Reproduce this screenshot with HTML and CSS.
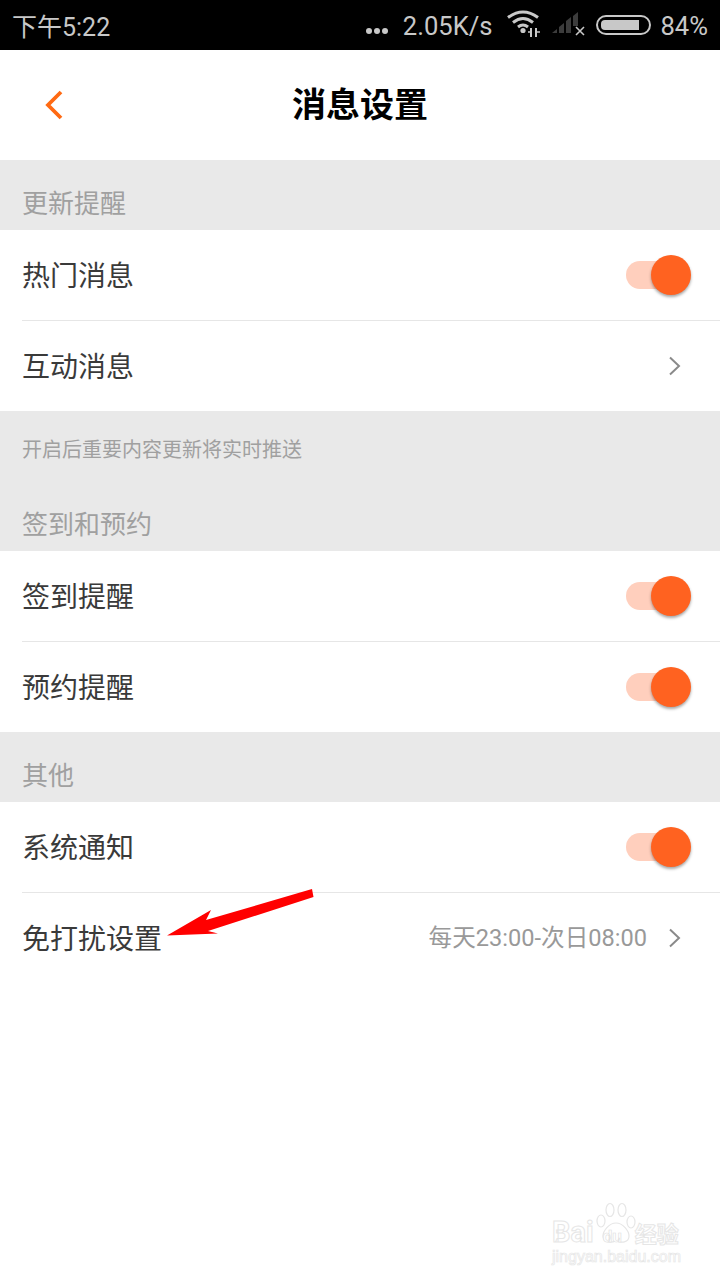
FILE: index.html
```html
<!DOCTYPE html>
<html lang="zh-CN">
<head>
  <meta charset="UTF-8">
  <title>消息设置</title>
  <link rel="stylesheet" href="styles.css">
</head>
<body>
  <div class="statusbar">
    <span class="time">下午5:22</span>
    <div class="status-right">
      <span class="dots"><i></i><i></i><i></i></span>
      <span class="speed">2.05K/s</span>
      <svg class="wifi" width="36" height="28" viewBox="0 0 36 28">
        <path d="M2 8.5 Q17 -2.5 32 8.5" fill="none" stroke="#c8c8c8" stroke-width="3"/>
        <path d="M7 13.5 Q17 5.5 27 13.5" fill="none" stroke="#c8c8c8" stroke-width="3"/>
        <path d="M12 18 Q17 14 22 18" fill="none" stroke="#c8c8c8" stroke-width="3"/>
        <circle cx="17" cy="21.5" r="2.6" fill="#c8c8c8"/>
        <path d="M24 19v9h2v-9zM29 19v9h2v-9z" fill="#c8c8c8"/>
        <path d="M22 23h2M31 23h3" stroke="#c8c8c8" stroke-width="1.5"/>
      </svg>
      <svg class="signal" width="34" height="24" viewBox="0 0 34 24">
        <path d="M0 21 L5 17 V21Z M7 21 V15 L12 11 V21Z" fill="#3c3c3c"/>
        <path d="M14 21 V9 L19 5 V21Z M21 14 V4 L26 0 V14Z" fill="#3c3c3c"/>
        <path d="M24 15 L32 23 M32 15 L24 23" stroke="#c8c8c8" stroke-width="1.6"/>
      </svg>
      <span class="battery"><span class="battery-fill"></span></span>
      <span class="percent">84%</span>
    </div>
  </div>

  <header class="topbar">
    <svg class="back" width="20" height="30" viewBox="0 0 20 30">
      <path d="M17 2 L4 15 L17 28" fill="none" stroke="#ff6a13" stroke-width="3.8"/>
    </svg>
    <h1>消息设置</h1>
  </header>

  <div class="section-title">更新提醒</div>
  <div class="row">
    <span>热门消息</span>
    <span class="switch"><span class="knob"></span></span>
  </div>
  <div class="row row-last">
    <span>互动消息</span>
    <svg class="arrow" width="14" height="20" viewBox="0 0 14 20">
      <path d="M2 1.5 L11 10 L2 18.5" fill="none" stroke="#8a8a8a" stroke-width="2"/>
    </svg>
  </div>
  <div class="note">开启后重要内容更新将实时推送</div>

  <div class="section-title section-title-after-note">签到和预约</div>
  <div class="row">
    <span>签到提醒</span>
    <span class="switch"><span class="knob"></span></span>
  </div>
  <div class="row row-last">
    <span>预约提醒</span>
    <span class="switch"><span class="knob"></span></span>
  </div>

  <div class="section-title">其他</div>
  <div class="row">
    <span>系统通知</span>
    <span class="switch"><span class="knob"></span></span>
  </div>
  <div class="row row-last">
    <span>免打扰设置</span>
    <span class="row-right">
      <span class="row-value">每天23:00-次日08:00</span>
      <svg class="arrow" width="14" height="20" viewBox="0 0 14 20">
        <path d="M2 1.5 L11 10 L2 18.5" fill="none" stroke="#8a8a8a" stroke-width="2"/>
      </svg>
    </span>
  </div>

  <svg class="pointer" width="150" height="50" viewBox="0 0 150 50">
    <path d="M145 0 L146.5 8 L41 42 L51 44.5 L0 46.5 L44 21 L39 31Z" fill="#ff0000"/>
  </svg>

  <div class="watermark">
    <svg class="paw" width="40" height="44" viewBox="0 0 40 44">
      <g fill="#fff" stroke="#e6e6e6" stroke-width="1.2">
        <ellipse cx="5" cy="19" rx="4" ry="6"/>
        <ellipse cx="14" cy="8" rx="4" ry="6.5"/>
        <ellipse cx="26" cy="8" rx="4" ry="6.5"/>
        <ellipse cx="35" cy="20" rx="4" ry="6"/>
        <path d="M20 21 C27 21 33 29 33 34 C33 41 25 41 20 39 C15 41 7 41 7 34 C7 29 13 21 20 21Z"/>
      </g>
    </svg>
    <div class="wm-logo"><span>Bai</span><span class="wm-du">du</span><span class="wm-cn">经验</span></div>
    <div class="wm-url">jingyan.baidu.com</div>
  </div>
</body>
</html>
```

FILE: styles.css
```css
html, body {
  margin: 0;
  padding: 0;
}

body {
  position: relative;
  width: 720px;
  height: 1280px;
  overflow: hidden;
  background-color: #fff;
  font-family: "Roboto", "Noto Sans CJK SC", sans-serif;
}

.statusbar {
  height: 50px;
  background-color: #000;
  color: #c8c8c8;
  display: flex;
  align-items: center;
  justify-content: space-between;
  padding: 0 12px;
  font-size: 25px;
}

.status-right {
  display: flex;
  align-items: center;
  font-size: 25.6px;
  padding-top: 1px;
}

.dots {
  display: flex;
  gap: 2px;
  margin-top: 10px;
  margin-right: 15px;
}

.dots i {
  width: 6px;
  height: 6px;
  border-radius: 50%;
  background-color: #c8c8c8;
}

.wifi {
  margin-left: 14px;
  margin-bottom: 6px;
}

.signal {
  margin-left: 10px;
  margin-bottom: 3px;
}

.battery {
  width: 55px;
  height: 20px;
  margin-left: 10px;
  margin-bottom: 2px;
  border: 2px solid #c8c8c8;
  border-radius: 11px;
  padding: 3px;
  box-sizing: border-box;
  display: block;
}

.battery-fill {
  display: block;
  width: 38px;
  height: 10px;
  background-color: #c8c8c8;
  border-radius: 4px 0 0 4px;
}

.percent {
  margin-left: 9px;
}

.topbar {
  height: 110px;
  display: flex;
  align-items: center;
  justify-content: center;
  position: relative;
}

.back {
  position: absolute;
  left: 44px;
  top: 40px;
}

.topbar h1 {
  margin: 0;
  font-size: 34px;
  font-weight: 700;
  color: #000;
  position: relative;
  top: -3px;
}

.section-title {
  height: 70px;
  box-sizing: border-box;
  padding: 27px 22px 0;
  background-color: #e9e9e9;
  color: #a0a0a0;
  font-size: 26px;
  line-height: 34px;
}

.section-title-after-note {
  height: 60px;
  padding-top: 17px;
}

.row {
  height: 91px;
  box-sizing: border-box;
  margin-left: 22px;
  padding: 0 30px 0 0;
  display: flex;
  align-items: center;
  justify-content: space-between;
  border-bottom: 1px solid #e6e6e6;
  color: #3a3a3a;
  font-size: 28px;
}

.row > span:first-child {
  position: relative;
  top: -1px;
}

.row-last {
  height: 90px;
  border-bottom: none;
}

.row-right {
  display: flex;
  align-items: center;
  gap: 21px;
}

.row-value {
  font-size: 23.6px;
  color: #999;
  position: relative;
  top: -2px;
}

.arrow {
  display: block;
  margin-right: 8px;
}

.switch {
  width: 64px;
  height: 28px;
  border-radius: 14px;
  background-color: #ffcfbd;
  position: relative;
  display: block;
}

.knob {
  position: absolute;
  right: -1px;
  top: -6px;
  width: 40px;
  height: 40px;
  border-radius: 50%;
  background-color: #ff6220;
  box-shadow: 0 2px 3px rgba(0, 0, 0, 0.35);
}

.note {
  height: 80px;
  box-sizing: border-box;
  padding: 24px 22px 0;
  background-color: #e9e9e9;
  color: #a0a0a0;
  font-size: 20px;
  line-height: 30px;
}

.pointer {
  position: absolute;
  left: 167px;
  top: 889px;
}

.watermark {
  position: absolute;
  left: 552px;
  top: 1202px;
  width: 132px;
  color: #e6e6e6;
}

.paw {
  position: absolute;
  left: 44px;
  top: 0;
}

.wm-logo {
  position: relative;
  margin-top: 15px;
  display: flex;
  align-items: baseline;
  font-size: 29px;
  font-weight: 700;
  line-height: 30px;
  height: 30px;
  white-space: nowrap;
  color: #fff;
  -webkit-text-stroke: 1px #e6e6e6;
}

.wm-du {
  font-size: 17px;
  margin-left: 9px;
  -webkit-text-stroke: 0.6px #e0e0e0;
}

.wm-cn {
  font-size: 22px;
  margin-left: 13px;
}

.wm-url {
  margin-top: 0;
  font-size: 16px;
  font-family: "Liberation Sans", sans-serif;
  line-height: 20px;
  white-space: nowrap;
  color: #fff;
  -webkit-text-stroke: 0.7px #e6e6e6;
}
```
